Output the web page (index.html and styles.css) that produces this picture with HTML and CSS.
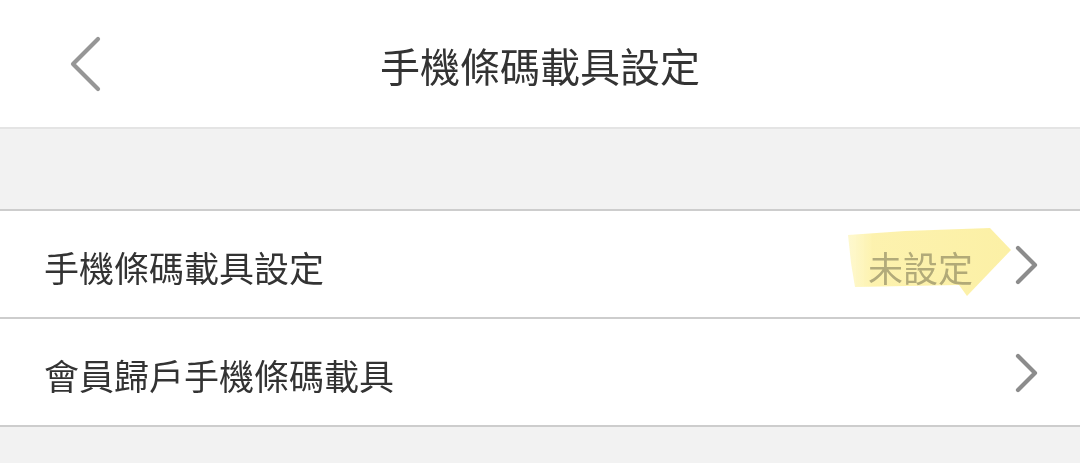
FILE: index.html
```html
<!DOCTYPE html>
<html lang="zh-Hant">
<head>
<meta charset="utf-8">
<title>手機條碼載具設定</title>
<link rel="stylesheet" href="styles.css">
</head>
<body>
<header class="nav">
  <div class="nav-left">
    <svg class="back" width="40" height="56" viewBox="0 0 40 56">
      <polyline points="28,3 3,28 28,53" fill="none" stroke="#969696" stroke-width="4.2" stroke-linecap="round" stroke-linejoin="round"/>
    </svg>
  </div>
  <h1 class="title">手機條碼載具設定</h1>
  <div class="nav-right"></div>
</header>
<div class="gap"></div>
<ul class="list">
  <li class="row">
    <span class="label">手機條碼載具設定</span>
    <span class="value">未設定
      <svg class="marker" width="170" height="76" viewBox="0 0 170 76">
        <defs>
          <linearGradient id="hl" x1="0" x2="1" y1="0" y2="0">
            <stop offset="0" stop-color="#fdf4b0" stop-opacity="0.6"/>
            <stop offset="0.15" stop-color="#fdf1a6" stop-opacity="0.9"/>
            <stop offset="1" stop-color="#fcef9c" stop-opacity="0.9"/>
          </linearGradient>
        </defs>
        <polygon points="3,10 60,6 145,3 166,25 122,71 114,60 10,62 6,38" fill="url(#hl)"/>
      </svg>
    </span>
    <svg class="chev" width="24" height="40" viewBox="0 0 24 40">
      <polyline points="3,3 20,20 3,37" fill="none" stroke="#8c8c8c" stroke-width="4.2" stroke-linecap="round" stroke-linejoin="round"/>
    </svg>
  </li>
  <li class="row">
    <span class="label">會員歸戶手機條碼載具</span>
    <svg class="chev" width="24" height="40" viewBox="0 0 24 40">
      <polyline points="3,3 20,20 3,37" fill="none" stroke="#8c8c8c" stroke-width="4.2" stroke-linecap="round" stroke-linejoin="round"/>
    </svg>
  </li>
</ul>
</body>
</html>
```
FILE: styles.css
```css
html, body {
  margin: 0;
  padding: 0;
  background: #f2f2f2;
  font-family: "Noto Sans CJK TC", "Noto Sans", sans-serif;
  color: #333333;
}

.nav {
  height: 127px;
  background: #ffffff;
  border-bottom: 2px solid #e4e4e4;
  display: grid;
  grid-template-columns: 1fr auto 1fr;
  align-items: center;
}

.nav-left {
  display: flex;
  align-items: center;
  padding-left: 70px;
}

.back {
  display: block;
  margin-top: 0;
}

.title {
  margin: 0;
  font-size: 40px;
  font-weight: 400;
  line-height: 1;
  color: #333333;
  padding-top: 3px;
}

.gap {
  height: 80px;
}

.list {
  list-style: none;
  margin: 0;
  padding: 0;
  border-top: 2px solid #cdcdcd;
}

.row {
  height: 106px;
  background: #ffffff;
  border-bottom: 2px solid #cdcdcd;
  display: flex;
  align-items: center;
  padding: 0 41px 0 44px;
}

.label {
  flex: 1;
  font-size: 35px;
  line-height: 1;
  color: #333333;
  padding-top: 4px;
}

.value {
  position: relative;
  font-size: 35px;
  line-height: 1;
  color: #b4b4b4;
  margin-right: 42px;
  padding-top: 4px;
}

.marker {
  position: absolute;
  left: -23px;
  top: -20px;
  mix-blend-mode: multiply;
  pointer-events: none;
}

.chev {
  display: block;
  margin-top: 2px;
}
```
